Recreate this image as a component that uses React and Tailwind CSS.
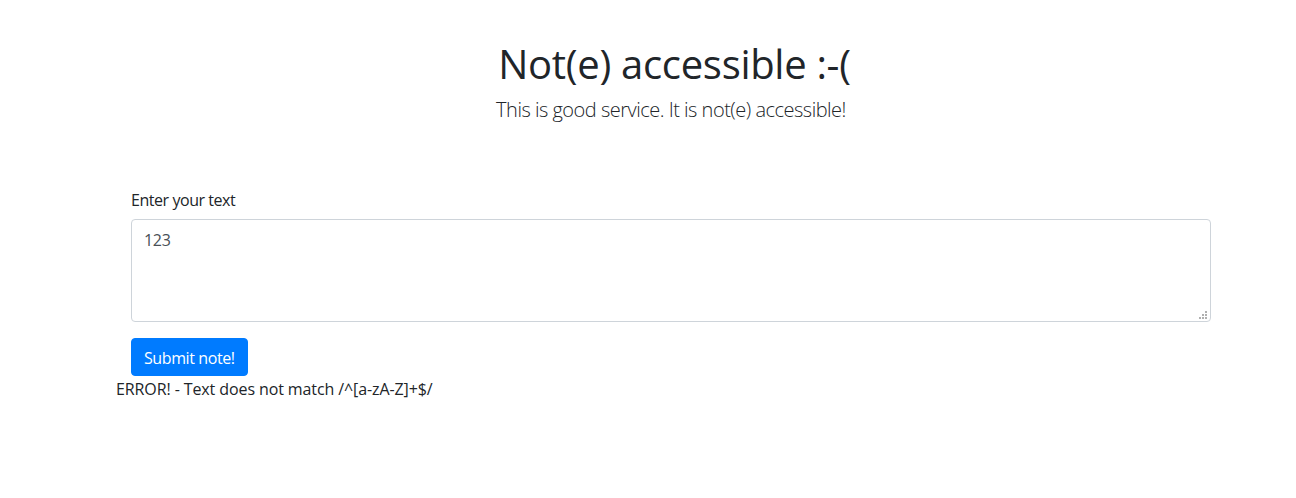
export default function App() {
  return (
    <div className="min-h-[498px] bg-white font-['Open_Sans',sans-serif] text-[#212529]">
      <div className="ml-[131px] w-[1080px] pt-[40px]">
        <h1 className="pl-[7px] text-center text-[40px] font-normal leading-[48px] tracking-[-0.3px]">Not(e) accessible :-(</h1>
        <p className="mt-[7px] text-center text-[20px] font-light leading-[30px] tracking-[-0.5px]">
          This is good service. It is not(e) accessible!
        </p>
        <div className="mt-[63px] text-[16px] leading-[24px] tracking-[-0.45px]">Enter your text</div>
        <div className="relative mt-[7px]">
          <textarea
            defaultValue="123"
            className="block h-[103px] w-full resize-none rounded-[4px] border border-[#ced4da] px-[12px] pt-[8px] pb-[4px] text-[16px] leading-[24px] tracking-[-0.3px] text-[#495057] outline-none"
          />
          <div className="pointer-events-none absolute right-[4px] bottom-[3px] grid grid-cols-3 gap-[1px]">
            <span className="h-[2px] w-[2px]" />
            <span className="h-[2px] w-[2px]" />
            <span className="h-[2px] w-[2px] bg-[#b0b0b0]" />
            <span className="h-[2px] w-[2px]" />
            <span className="h-[2px] w-[2px] bg-[#b0b0b0]" />
            <span className="h-[2px] w-[2px] bg-[#b0b0b0]" />
            <span className="h-[2px] w-[2px] bg-[#b0b0b0]" />
            <span className="h-[2px] w-[2px] bg-[#b0b0b0]" />
            <span className="h-[2px] w-[2px] bg-[#b0b0b0]" />
          </div>
        </div>
        <button className="mt-[16px] block h-[38px] rounded-[4px] border border-[#007bff] bg-[#007bff] px-[12px] pt-[1px] text-[16px] leading-[24px] tracking-[-0.4px] text-white">
          Submit note!
        </button>
        <div className="-ml-[15px] pt-[1px] text-[16px] leading-[24px] tracking-[-0.1px]">ERROR! - Text does not match /^[a-zA-Z]+$/</div>
      </div>
    </div>
  );
}
